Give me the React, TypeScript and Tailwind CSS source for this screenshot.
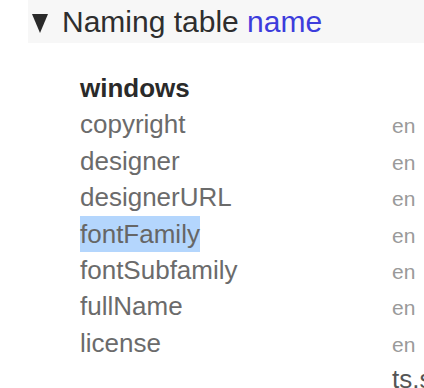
const rows = [
  'copyright',
  'designer',
  'designerURL',
  'fontFamily',
  'fontSubfamily',
  'fullName',
  'license',
];

export default function App() {
  return (
    <div className="w-[424px] h-[388px] overflow-hidden bg-white font-['Liberation_Sans',Arial,sans-serif]">
      {/* Section header */}
      <div className="ml-[28px] h-[43px] bg-[#f7f7f7] flex items-center pl-[4px] whitespace-nowrap">
        <svg width="16" height="19" viewBox="0 0 16 19" className="shrink-0 mt-[3px]">
          <polygon points="0,0 16,0 8,19" fill="#2a2a2a" />
        </svg>
        <span className="ml-[14px] text-[30px] leading-none text-[#2e2e2e]">
          Naming table <span className="text-[#3d3ddc]">name</span>
        </span>
      </div>

      {/* Records */}
      <div className="mt-[27px] pl-[80px] text-[26px] leading-[1.4] whitespace-nowrap">
        <div className="font-bold text-[#2a2a2a]">windows</div>
        {rows.map((r) => (
          <div key={r} className="flex items-baseline">
            <div className="w-[312px] shrink-0">
              <span
                className={
                  r === 'fontFamily'
                    ? 'bg-[#b4d6fd] text-[#666] inline-block'
                    : 'text-[#6b6b6b]'
                }
              >
                {r}
              </span>
            </div>
            <div className="text-[21px] text-[#9a9a9a]">en</div>
          </div>
        ))}
        <div className="flex items-baseline">
          <div className="w-[312px] shrink-0" />
          <div className="text-[#555]">ts.sil.org</div>
        </div>
      </div>
    </div>
  );
}
